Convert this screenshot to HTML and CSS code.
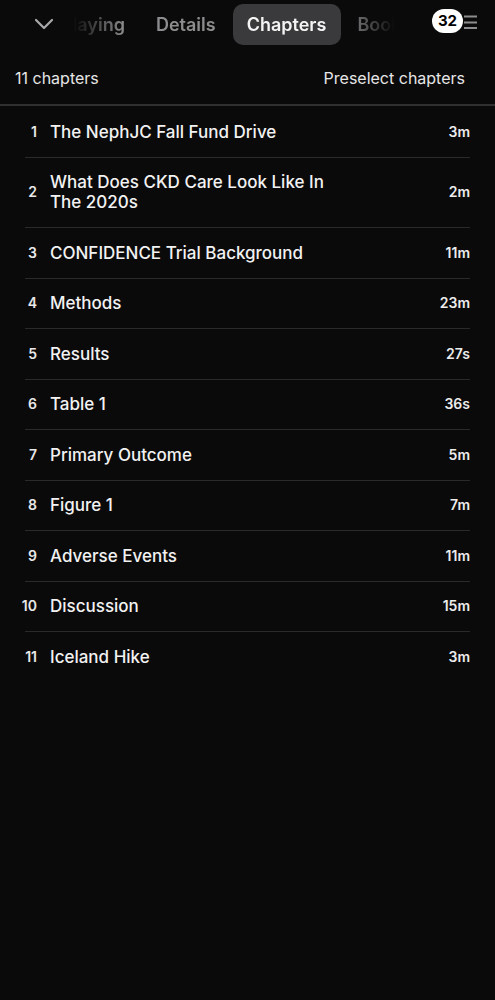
FILE: index.html
```html
<!DOCTYPE html>
<html lang="en">
<head>
    <meta charset="UTF-8">
    <meta name="viewport" content="width=device-width, initial-scale=1.0">
    <title>Chapters</title>
    <link rel="stylesheet" href="styles.css">
</head>
<body>
    <div class="tabbar">
        <button class="back" aria-label="Close">
            <svg width="20" height="12" viewBox="0 0 20 12"><path d="M2 2 L10 10 L18 2" fill="none" stroke="#a9a9ab" stroke-width="2.2" stroke-linecap="round" stroke-linejoin="round"/></svg>
        </button>
        <div class="tabs">
            <div class="tab first">Playing</div>
            <div class="tab">Details</div>
            <div class="tab active">Chapters</div>
            <div class="tab">Bookmarks</div>
        </div>
        <div class="queue">
            <span class="badge">32</span>
            <svg class="list-icon" width="13" height="16" viewBox="0 0 13 16"><path d="M0 3.5 H13 M0 9.5 H13 M0 15 H13" stroke="#8d8d90" stroke-width="2"/></svg>
        </div>
    </div>

    <div class="summary">
        <span>11 chapters</span>
        <span>Preselect chapters</span>
    </div>
    <div class="divider"></div>

    <ul class="chapters">
        <li><span class="num">1</span><span class="title">The NephJC Fall Fund Drive</span><span class="time">3m</span></li>
        <li><span class="num">2</span><span class="title">What Does CKD Care Look Like In The 2020s</span><span class="time">2m</span></li>
        <li><span class="num">3</span><span class="title">CONFIDENCE Trial Background</span><span class="time">11m</span></li>
        <li><span class="num">4</span><span class="title">Methods</span><span class="time">23m</span></li>
        <li><span class="num">5</span><span class="title">Results</span><span class="time">27s</span></li>
        <li><span class="num">6</span><span class="title">Table 1</span><span class="time">36s</span></li>
        <li><span class="num">7</span><span class="title">Primary Outcome</span><span class="time">5m</span></li>
        <li><span class="num">8</span><span class="title">Figure 1</span><span class="time">7m</span></li>
        <li><span class="num">9</span><span class="title">Adverse Events</span><span class="time">11m</span></li>
        <li><span class="num">10</span><span class="title">Discussion</span><span class="time">15m</span></li>
        <li><span class="num">11</span><span class="title">Iceland Hike</span><span class="time">3m</span></li>
    </ul>
</body>
</html>
```

FILE: styles.css
```css
body {
    margin: 0;
    background: #0b0a0b;
    color: #f2f2f2;
    font-family: Inter, "Noto Sans", sans-serif;
}
.tabbar {
    display: flex;
    align-items: center;
    height: 48px;
}
.back {
    background: none;
    border: 0;
    padding: 0;
    margin-left: 34px;
    width: 20px;
    height: 48px;
    display: flex;
    align-items: center;
}
.tabs {
    flex: 1;
    display: flex;
    align-items: center;
    gap: 2px;
    overflow: hidden;
    height: 48px;
    /* fade the tabs that scroll out at both edges */
    -webkit-mask-image: linear-gradient(to right, transparent 0, transparent 19px, #000 70px, #000 calc(100% - 80px), transparent calc(100% - 30px));
    mask-image: linear-gradient(to right, transparent 0, transparent 19px, #000 70px, #000 calc(100% - 80px), transparent calc(100% - 30px));
}
.tab {
    flex: none;
    padding: 0 15px 0 14px;
    height: 41px;
    line-height: 41px;
    border-radius: 10px;
    font-size: 18px;
    font-weight: 600;
    color: #8c8c8e;
}
.tab.first {
    margin-left: -7px;
}
.tab.active {
    background: #3a393b;
    color: #f4f4f4;
}
.queue {
    display: flex;
    align-items: center;
    width: 70px;
    height: 48px;
    margin-top: -6px;
}
.badge {
    background: #fff;
    color: #000;
    font-size: 15px;
    font-weight: 700;
    width: 31px;
    height: 24px;
    line-height: 24px;
    text-align: center;
    border-radius: 12px;
    margin-left: 7px;
    position: relative;
    z-index: 1;
}
.list-icon {
    margin-left: 1px;
    margin-top: -1px;
}
.summary {
    display: flex;
    justify-content: space-between;
    align-items: center;
    box-sizing: border-box;
    height: 56px;
    padding: 4px 30px 0 15px;
    font-size: 16px;
    color: #e6e6e6;
}
.divider {
    height: 2px;
    background: #303031;
}
.chapters {
    list-style: none;
    margin: 0 25px;
    padding: 1px 0 0;
}
.chapters li {
    display: flex;
    align-items: center;
    padding: 14.75px 0;
    line-height: 20px;
    border-bottom: 1px solid #2a2a2b;
}
.chapters li:last-child {
    border-bottom: 0;
}
.num {
    flex: none;
    display: flex;
    justify-content: flex-end;
    width: 12px;
    font-size: 14px;
    font-weight: 600;
    color: #e8e8e8;
}
.title {
    margin-left: 13px;
    max-width: 290px;
    font-size: 17px;
    font-weight: 500;
}
.time {
    margin-left: auto;
    font-size: 14px;
    font-weight: 600;
    color: #ececec;
}
```
